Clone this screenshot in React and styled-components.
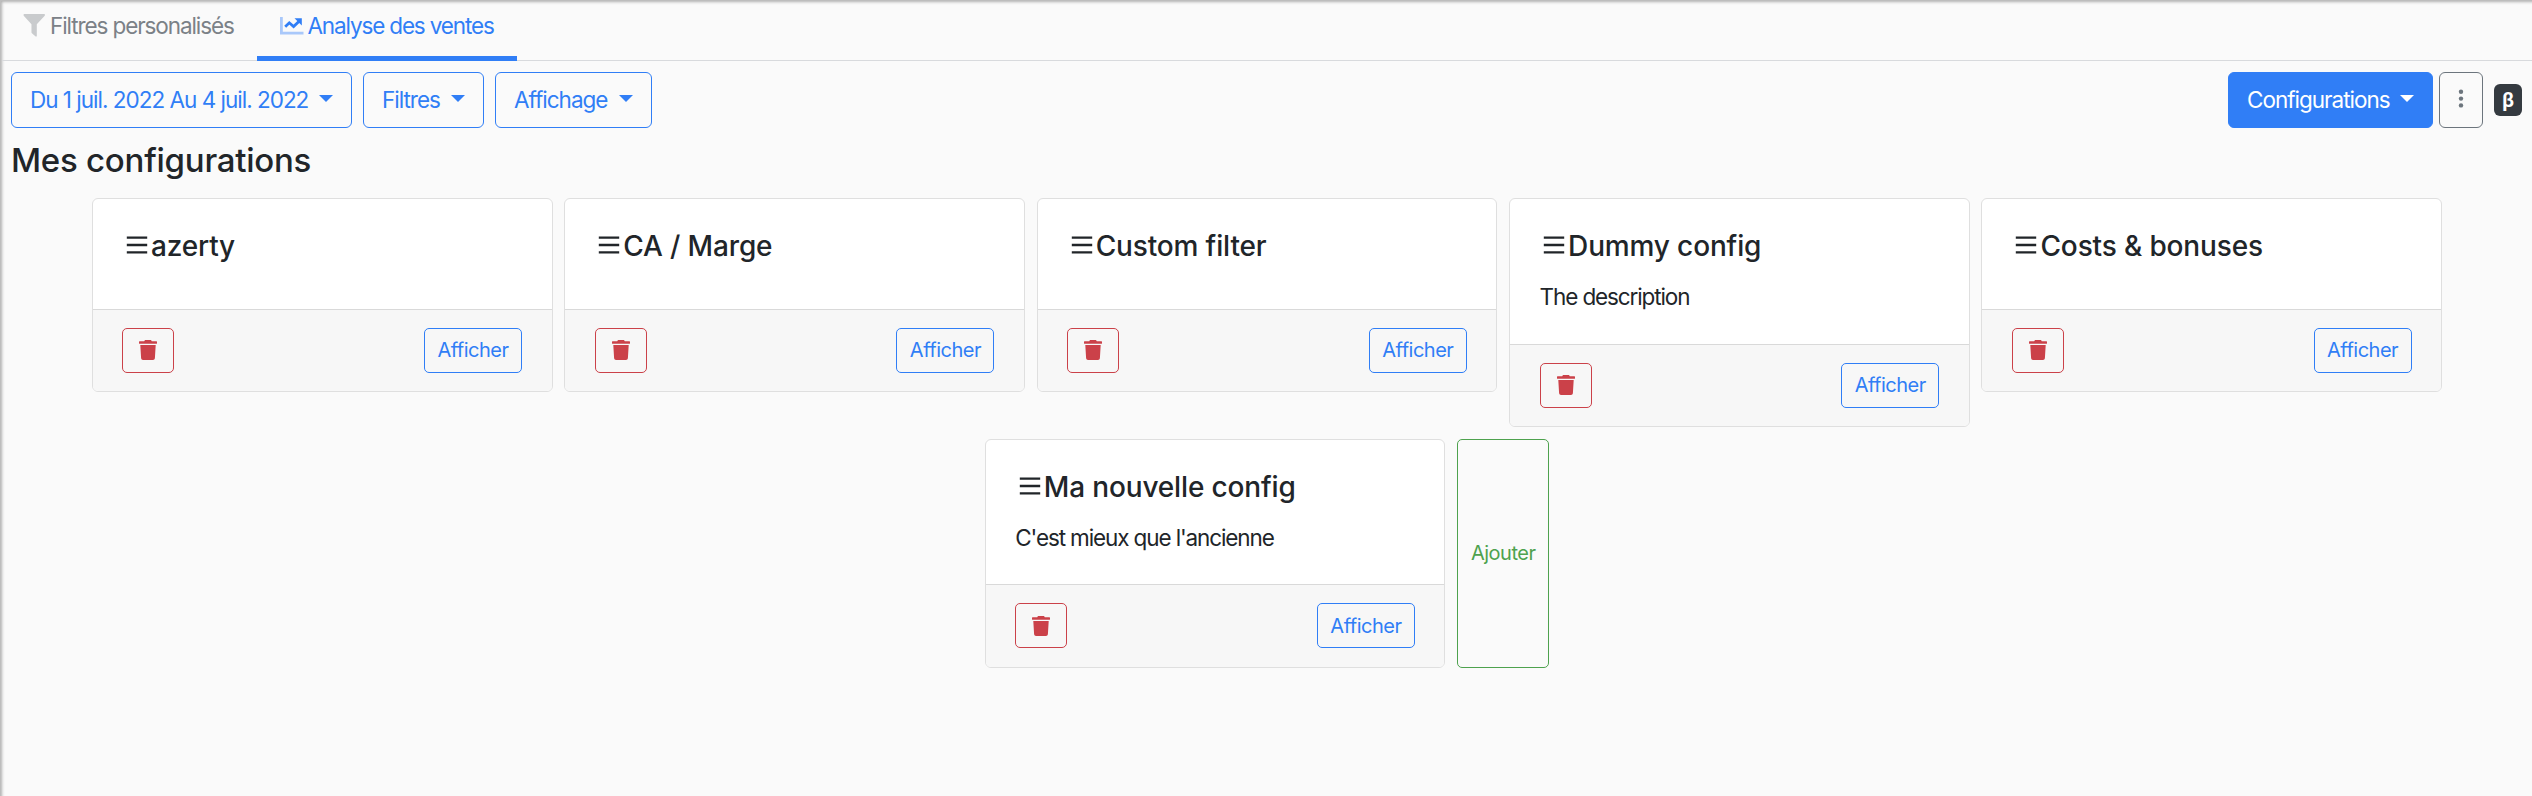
import React from "react";
import styled, { createGlobalStyle, css } from "styled-components";

const Global = createGlobalStyle`
  *, *::before, *::after { box-sizing: border-box; }
  html, body { margin: 0; padding: 0; }
  body {
    background: #fafafa;
    color: #212529;
    font-family: Inter, "Liberation Sans", sans-serif;
    font-size: 22.5px;
    line-height: 34px;
  }
  button { font: inherit; margin: 0; cursor: pointer; }
`;

const blue = "#307ef6";
const red = "#cb4149";
const green = "#4ea24e";

const Page = styled.div`
  height: 796px;
  overflow: hidden;
  padding: 1px 0 0 1px;
  border-left: 1px solid #bdbdbd;
  border-top: 1px solid #bdbdbd;
  box-shadow: inset 3px 3px 3px -2px #b0b0b0;
`;

const Tabs = styled.nav`
  display: flex;
  height: 59px;
  border-bottom: 1px solid #d8dadd;
`;

const Tab = styled.a`
  display: flex;
  align-items: flex-start;
  height: 59px;
  width: ${(p) => p.$width}px;
  padding: 7px 0 0 21px;
  color: ${(p) => (p.$active ? blue : "#7b8187")};
  border-bottom: ${(p) => (p.$active ? `5px solid ${blue}` : "0")};
  svg { flex: none; }
`;

const Label = styled.span`
  white-space: nowrap;
  letter-spacing: ${(p) => p.$track || 0}px;
`;

const Toolbar = styled.div`
  display: flex;
  padding: 11px 10px 0 9px;
`;

const Button = styled.button`
  display: flex;
  align-items: center;
  height: 56px;
  width: ${(p) => p.$width}px;
  margin-right: ${(p) => p.$after ?? 11}px;
  padding: 0 0 0 18px;
  border: 1px solid ${blue};
  border-radius: 6px;
  background: ${(p) => (p.$filled ? blue : "transparent")};
  color: ${(p) => (p.$filled ? "#fff" : blue)};
`;

const Caret = styled.span`
  flex: none;
  margin: 0 18px 3px auto;
  border-top: 7px solid currentColor;
  border-left: 7px solid transparent;
  border-right: 7px solid transparent;
`;

const Spacer = styled.div`
  flex: 1;
`;

const Kebab = styled.button`
  display: flex;
  justify-content: center;
  width: 44px;
  height: 56px;
  padding: 16px 0 0;
  border: 1px solid #6c757d;
  border-radius: 6px;
  background: transparent;
  color: #6c757d;
`;

const Badge = styled.span`
  align-self: center;
  width: 28px;
  height: 32px;
  margin-left: 11px;
  border-radius: 6px;
  background: #343a40;
  color: #fff;
  font-family: Roboto, sans-serif;
  font-size: 20px;
  font-weight: 700;
  line-height: 32px;
  text-align: center;
`;

const Heading = styled.h1`
  margin: 11px 0 0 9px;
  font-size: 33px;
  font-weight: 500;
  line-height: 42px;
`;

const Grid = styled.div`
  display: flex;
  flex-wrap: wrap;
  justify-content: center;
  align-items: flex-start;
  gap: 11.8px;
  padding: 16.8px 60px 0;
`;

const Card = styled.article`
  width: 460.6px;
  border: 1px solid #dfdfdf;
  border-radius: 6px;
  background: #fff;
  overflow: hidden;
`;

const CardBody = styled.div`
  height: ${(p) => (p.$tall ? 144.8 : 110)}px;
  padding: 29px 29.5px;
`;

const Title = styled.h2`
  display: flex;
  align-items: center;
  margin: 0;
  padding-left: 3.5px;
  font-size: 28px;
  font-weight: 500;
  line-height: 36px;
  svg { flex: none; margin: 0 3px 2px 0; }
`;

const Description = styled.p`
  margin: 16px 0 0;
  line-height: 34px;
`;

const CardFooter = styled.footer`
  display: flex;
  justify-content: space-between;
  height: 82.2px;
  padding: 18px 29.5px 0;
  border-top: 1px solid #d9d9d9;
  background: #f7f7f7;
`;

const outline = css`
  display: flex;
  align-items: center;
  justify-content: center;
  padding: 0;
  border: 1px solid currentColor;
  border-radius: 5px;
  background: transparent;
  font-size: 20px;
`;

const DeleteButton = styled.button`
  ${outline}
  width: 52px;
  height: 45px;
  color: ${red};
`;

const ShowButton = styled.button`
  ${outline}
  width: 98px;
  height: 45px;
  color: ${blue};
`;

const AddButton = styled.button`
  ${outline}
  width: 92px;
  align-self: stretch;
  color: ${green};
`;

const Funnel = styled(({ className }) => (
  <svg className={className} width="23" height="23" viewBox="0 0 25 24" preserveAspectRatio="none">
    <path d="M1.2 0H23.2Q24.5.7 23.6 1.8L15 10.6V23.2Q14.3 23.8 13.4 23.2L10 20.4Q9.2 19.7 9.2 18.7V10.6L.8 1.8Q0 .6 1.2 0Z" fill="#c9cbcd" />
  </svg>
))`
  margin: 5px 4px 0 0;
`;

const ChartLine = styled(({ className }) => (
  <svg className={className} width="24" height="18" viewBox="0 0 24 18">
    <path d="M1.4 0V16.2H23.5" fill="none" stroke="#a9c8fa" strokeWidth="2.8" />
    <path d="M5.2 9.8L9.3 5.8L13.6 9.6L19.4 4" fill="none" stroke={blue} strokeWidth="2.8" />
    <path d="M14.5 1.2H21.8V8.5Z" fill={blue} />
  </svg>
))`
  margin: 8px 4px 0 1.5px;
`;

const Bars = () => (
  <svg width="22" height="18" viewBox="0 0 22 18">
    <path d="M.8 1.6H21.2M.8 9H21.2M.8 16.4H21.2" stroke="#212529" strokeWidth="2.4" strokeLinecap="butt" />
  </svg>
);

const Trash = () => (
  <svg width="18" height="20" viewBox="0 0 18 20">
    <path d="M.6 1.2H5.2L6 0H12L12.8 1.2H17.4Q18 1.2 18 1.8V3.3Q18 3.8 17.4 3.8H.6Q0 3.8 0 3.3V1.8Q0 1.2.6 1.2ZM1.3 5H16.7L15.9 18.2Q15.7 20 14 20H4Q2.3 20 2.1 18.2Z" fill="currentColor" />
  </svg>
);

const Dots = () => (
  <svg width="6" height="20" viewBox="0 0 6 20">
    <circle cx="3" cy="2.8" r="2.2" fill="currentColor" />
    <circle cx="3" cy="9.6" r="2.2" fill="currentColor" />
    <circle cx="3" cy="16.4" r="2.2" fill="currentColor" />
  </svg>
);

const configs = [
  { title: "azerty" },
  { title: "CA / Marge" },
  { title: "Custom filter" },
  { title: "Dummy config", description: "The description" },
  { title: "Costs & bonuses" },
  { title: "Ma nouvelle config", description: "C'est mieux que l'ancienne" },
];

const ConfigCard = ({ title, description }) => (
  <Card>
    <CardBody $tall={Boolean(description)}>
      <Title>
        <Bars />
        <Label $track={-0.15}>{title}</Label>
      </Title>
      {description && <Description><Label $track={-1.12}>{description}</Label></Description>}
    </CardBody>
    <CardFooter>
      <DeleteButton aria-label="Supprimer"><Trash /></DeleteButton>
      <ShowButton><Label $track={-0.5}>Afficher</Label></ShowButton>
    </CardFooter>
  </Card>
);

export default function App() {
  return (
    <Page>
      <Global />
      <Tabs>
        <Tab $width={255}><Funnel /><Label $track={-1.1}>Filtres personalisés</Label></Tab>
        <Tab $width={260} $active><ChartLine /><Label $track={-1.15}>Analyse des ventes</Label></Tab>
      </Tabs>
      <Toolbar>
        <Button $width={341}><Label $track={-1.0}>Du 1 juil. 2022 Au 4 juil. 2022</Label><Caret /></Button>
        <Button $width={121}><Label $track={-1.0}>Filtres</Label><Caret /></Button>
        <Button $width={157}><Label $track={-1.0}>Affichage</Label><Caret /></Button>
        <Spacer />
        <Button $width={205} $after={6} $filled><Label $track={-1.0}>Configurations</Label><Caret /></Button>
        <Kebab aria-label="Plus"><Dots /></Kebab>
        <Badge>β</Badge>
      </Toolbar>
      <Heading><Label $track={-0.25}>Mes configurations</Label></Heading>
      <Grid>
        {configs.map((c) => <ConfigCard key={c.title} {...c} />)}
        <AddButton><Label $track={-0.5}>Ajouter</Label></AddButton>
      </Grid>
    </Page>
  );
}
